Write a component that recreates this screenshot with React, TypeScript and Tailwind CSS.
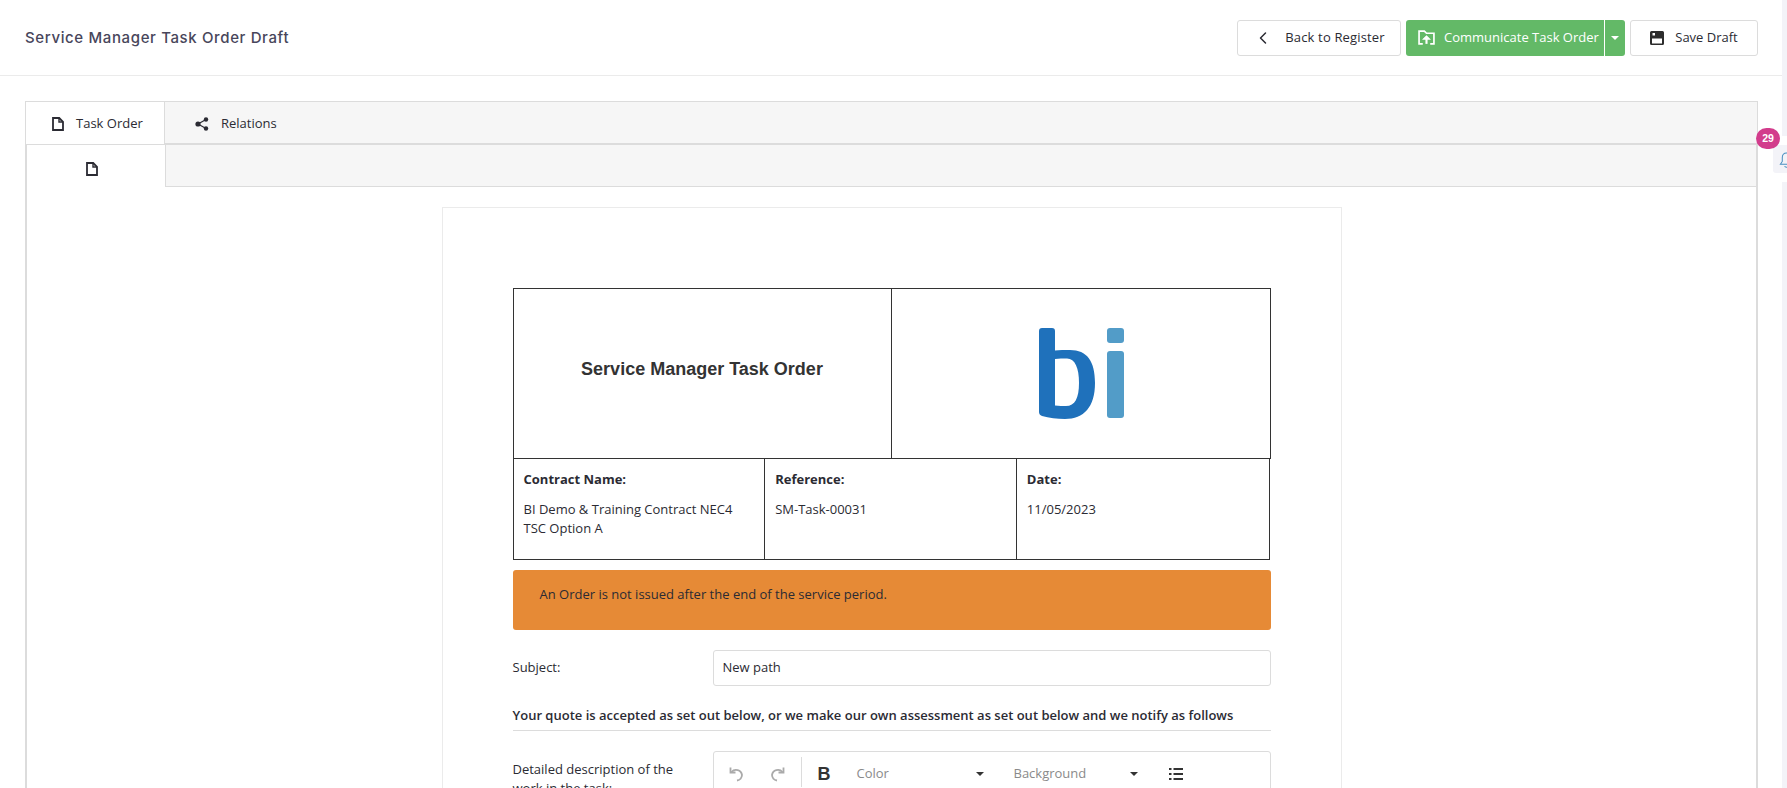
import { ChevronLeft } from "lucide-react";

function DocIcon({ className }: { className?: string }) {
  return (
    <svg viewBox="0 0 12 14" className={className} fill="none" stroke="currentColor" strokeWidth="1.8">
      <path d="M1 1h6.2L11 4.8V13H1z" />
      <path d="M7 1v4h4" strokeWidth="1.4" />
    </svg>
  );
}

function ShareIcon({ className }: { className?: string }) {
  return (
    <svg viewBox="0 0 14 14" className={className} fill="currentColor" stroke="currentColor">
      <path d="M11 2.5 3 7l8 4.5" fill="none" strokeWidth="1.2" />
      <circle cx="11" cy="2.5" r="2.2" stroke="none" />
      <circle cx="3" cy="7" r="2.6" stroke="none" />
      <circle cx="11" cy="11.5" r="2.2" stroke="none" />
    </svg>
  );
}

function FolderUpIcon({ className }: { className?: string }) {
  return (
    <svg viewBox="0 0 16 14" className={className} fill="none" stroke="currentColor" strokeWidth="1.6">
      <path d="M4.5 13H1V1h5l2 2h7v10h-3.5" />
      <path d="M8 13V6.5" strokeWidth="2" />
      <path d="M5 8.5l3-3 3 3z" fill="currentColor" strokeWidth="1" />
    </svg>
  );
}

function SaveIcon({ className }: { className?: string }) {
  return (
    <svg viewBox="0 0 14 14" className={className}>
      <path d="M1.5 0h11A1.500 1.500 0 0 1 14 1.500v11a1.500 1.500 0 0 1-1.500 1.500h-11A1.500 1.500 0 0 1 0 12.500v-11A1.500 1.500 0 0 1 1.500 0z" fill="#2d2d2d" />
      <rect x="2" y="7.500" width="10" height="5" fill="#fff" />
      <rect x="2.500" y="2" width="2.500" height="2.500" fill="#fff" />
    </svg>
  );
}

function UndoIcon({ className }: { className?: string }) {
  return (
    <svg viewBox="0 0 16 16" className={className} fill="none" stroke="currentColor" strokeWidth="1.800">
      <path d="M3.500 6A6 6 0 0 1 14 9a6 6 0 0 1-5 5.500" />
      <path d="M2.500 1.500v5h5" />
    </svg>
  );
}

function BiLogo() {
  return (
    <svg viewBox="0 0 85 91" className="h-[91px] w-[85px]">
      <path
        d="M3 0h10a3 3 0 0 1 3 3v19.500C20 22 26 22 31 22c17 0 25 11 25 33 0 24-11 36-30 36-8 0-16-1-23-3-2-1-3-2-3-4V3a3 3 0 0 1 3-3zM16 31v46.500c4 .5 8 .5 11 .5 9 0 13-8 13-23s-4-24.500-12-24.500c-4 0-8 0-12 .5z"
        fill="#1f71bb"
        fillRule="evenodd"
      />
      <rect x="68" y="0" width="17" height="15" rx="3" fill="#529cc8" />
      <rect x="68" y="23" width="17" height="67" rx="3" fill="#529cc8" />
    </svg>
  );
}

export default function App() {
  return (
    <div className="relative h-[788px] overflow-hidden bg-white font-['Open_Sans',sans-serif] text-[13px] text-[#2b2b33]">
      <header className="flex h-[76px] items-center justify-between border-b border-[#ebebeb] pl-[25px] pr-[29px]">
        <h1 className="pt-[2px] font-['Inter',sans-serif] text-[15px] font-medium tracking-[0.63px] text-[#48465b]">
          Service Manager Task Order Draft
        </h1>
        <div className="flex items-center gap-[5px]">
          <button className="flex h-[36px] w-[164px] items-center justify-center gap-[12px] rounded-[3px] border border-[#dcdcdc] bg-white">
            <ChevronLeft className="h-[20px] w-[20px]" strokeWidth={1.8} />
            <span className="tracking-[0.15px]">Back to Register</span>
          </button>
          <div className="flex h-[36px] w-[219px] rounded-[3px] bg-[#63b967] text-white">
            <div className="flex w-[199px] items-center gap-[9px] border-r border-white pl-[12px]">
              <FolderUpIcon className="h-[15px] w-[17px]" />
              <span>Communicate Task Order</span>
            </div>
            <div className="flex flex-1 items-center justify-center">
              <span className="h-0 w-0 border-x-[4px] border-t-[4px] border-x-transparent border-t-white" />
            </div>
          </div>
          <button className="flex h-[36px] w-[128px] items-center justify-center gap-[11px] rounded-[3px] border border-[#dcdcdc] bg-white">
            <SaveIcon className="h-[14px] w-[14px]" />
            <span>Save Draft</span>
          </button>
        </div>
      </header>

      <main className="pl-[25px] pr-[29px] pt-[25px]">
        <div className="border border-b-0 border-[#dcdcdc]">
          <div className="flex h-[43px] bg-[#f6f6f6]">
            <div className="flex w-[139px] items-center gap-[12px] border-b border-r border-[#dcdcdc] bg-white pl-[26px] pt-[2px]">
              <DocIcon className="h-[14px] w-[12px]" />
              <span>Task Order</span>
            </div>
            <div className="flex flex-1 items-center gap-[12px] border-b-2 border-[#dcdcdc] pl-[30px] pt-[2px]">
              <ShareIcon className="h-[14px] w-[14px]" />
              <span>Relations</span>
            </div>
          </div>
          <div className="flex h-[42px] border-x border-[#dcdcdc]">
            <div className="flex w-[139px] items-center border-r border-[#dcdcdc] bg-white pl-[59px] pt-[5px]">
              <DocIcon className="h-[14px] w-[12px]" />
            </div>
            <div className="flex-1 border-b border-[#dcdcdc] bg-[#f6f6f6]" />
          </div>
          <div className="border-x border-[#dcdcdc] pb-[40px] pt-[20px]">
            <div className="mx-auto w-[900px] border border-[#ebebeb] px-[70px] pb-[40px] pt-[80px]">
              <div className="flex h-[171px] border border-[#333]">
                <div className="flex w-[378px] items-center justify-center border-r border-[#333] pb-[8px] font-['Liberation_Sans',sans-serif] text-[18px] font-bold text-[#333]">
                  Service Manager Task Order
                </div>
                <div className="flex flex-1 items-center justify-center pl-[2px]">
                  <BiLogo />
                </div>
              </div>
              <div className="grid h-[101px] w-[757px] grid-cols-3 border-x border-b border-[#333]">
                <div className="border-r border-[#333] px-[10px] pt-[11px]">
                  <div className="font-bold">Contract Name:</div>
                  <div className="mt-[10px] leading-[19px]">BI Demo &amp; Training Contract NEC4 TSC Option A</div>
                </div>
                <div className="border-r border-[#333] px-[10px] pt-[11px]">
                  <div className="font-bold">Reference:</div>
                  <div className="mt-[10px] leading-[19px]">SM-Task-00031</div>
                </div>
                <div className="px-[10px] pt-[11px]">
                  <div className="font-bold">Date:</div>
                  <div className="mt-[10px] leading-[19px]">11/05/2023</div>
                </div>
              </div>
              <div className="mt-[10px] h-[60px] rounded-[3px] bg-[#e68a36] pl-[27px] pt-[15px]">
                An Order is not issued after the end of the service period.
              </div>
              <div className="mt-[20px] flex items-center">
                <label className="w-[200px]">Subject:</label>
                <div className="flex h-[36px] flex-1 items-center rounded-[3px] border border-[#dcdcdc] px-[9px]">New path</div>
              </div>
              <div className="mt-[20px] border-b border-[#dcdcdc] pb-[4px] font-semibold">
                Your quote is accepted as set out below, or we make our own assessment as set out below and we notify as follows
              </div>
              <div className="mt-[20px] flex">
                <label className="w-[200px] pr-[20px] pt-[9px] leading-[19px]">Detailed description of the work in the task:</label>
                <div className="h-[120px] flex-1 rounded-[3px] border border-[#dcdcdc]">
                  <div className="flex items-center pt-[5px] text-[#8a8a8a]">
                    <div className="flex h-[30px] w-[88px] items-center gap-[26px] border-r border-[#dcdcdc] pl-[14px] pt-[4px] text-[#aaa]">
                      <UndoIcon className="h-[16px] w-[16px]" />
                      <UndoIcon className="h-[16px] w-[16px] -scale-x-100" />
                    </div>
                    <div className="flex items-center pt-[4px]">
                      <span className="ml-[16px] font-['Liberation_Sans',sans-serif] text-[18px] font-bold text-[#333]">B</span>
                      <span className="ml-[26px] w-[119px]">Color</span>
                      <span className="h-0 w-0 border-x-[4px] border-t-[4px] border-x-transparent border-t-[#333]" />
                      <span className="ml-[30px] w-[116px]">Background</span>
                      <span className="h-0 w-0 border-x-[4px] border-t-[4px] border-x-transparent border-t-[#333]" />
                      <svg viewBox="0 0 14 12" className="ml-[31px] h-[12px] w-[14px] text-[#333]" fill="currentColor">
                        <rect x="0" y="0" width="2.500" height="2" />
                        <rect x="0" y="5" width="2.500" height="2" />
                        <rect x="0" y="10" width="2.500" height="2" />
                        <rect x="4.500" y="0" width="9.500" height="2" />
                        <rect x="4.500" y="5" width="9.500" height="2" />
                        <rect x="4.500" y="10" width="9.500" height="2" />
                      </svg>
                    </div>
                  </div>
                </div>
              </div>
            </div>
          </div>
        </div>
      </main>

      <div className="absolute right-0 top-0 h-full w-[5px] bg-[#f3f3f8]" />
      <div className="absolute left-[1768px] top-[136px] h-[46px] w-[19px] rounded-l-[4px] bg-white pl-[5px] pt-[9px]">
        <div className="h-[28px] w-[14px] overflow-hidden rounded-l-[3px] bg-[#f3f3f8] pl-[6px] pt-[7px]">
          <svg viewBox="0 0 16 18" className="h-[17px] w-[15px] max-w-none" fill="none" stroke="#4a90c0" strokeWidth="1.100">
            <path d="M8 1c3 0 4.500 2 4.500 5v4l2 3H1.500l2-3V6c0-3 1.500-5 4.500-5zM6 15c.5 1.500 3.500 1.500 4 0" />
          </svg>
        </div>
      </div>
      <div className="absolute left-[1756px] top-[128px] flex h-[21px] w-[24px] items-center justify-center rounded-full bg-[#d23c8c] font-['Liberation_Sans',sans-serif] text-[10.500px] font-bold text-white">
        29
      </div>
    </div>
  );
}
